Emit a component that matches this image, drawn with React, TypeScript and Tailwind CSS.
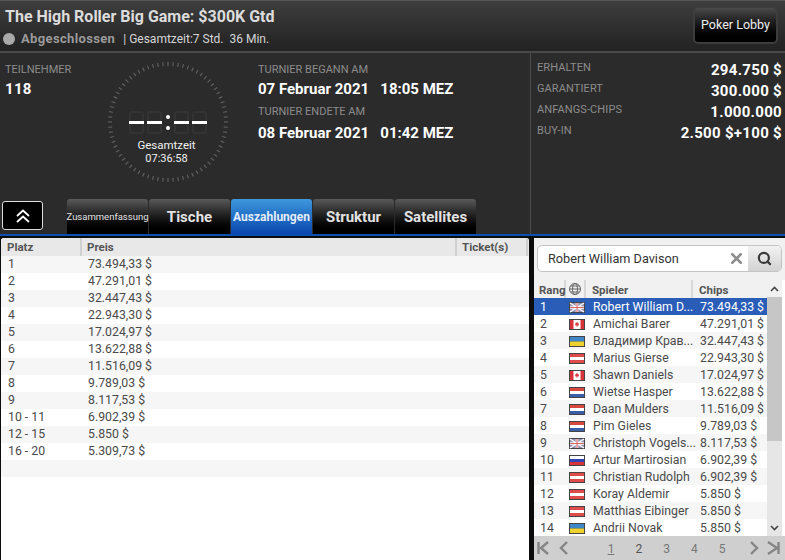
import { Search, X } from "lucide-react";

const font = { fontFamily: "Roboto, sans-serif" };

const prizes = [
  ["1", "73.494,33 $"],
  ["2", "47.291,01 $"],
  ["3", "32.447,43 $"],
  ["4", "22.943,30 $"],
  ["5", "17.024,97 $"],
  ["6", "13.622,88 $"],
  ["7", "11.516,09 $"],
  ["8", "9.789,03 $"],
  ["9", "8.117,53 $"],
  ["10 - 11", "6.902,39 $"],
  ["12 - 15", "5.850 $"],
  ["16 - 20", "5.309,73 $"],
  ["", ""],
];

type Flag = "uk" | "ca" | "ua" | "at" | "nl" | "ru";

const players: [number, Flag, string, string][] = [
  [1, "uk", "Robert William D...", "73.494,33 $"],
  [2, "ca", "Amichai Barer", "47.291,01 $"],
  [3, "ua", "Владимир Крав...", "32.447,43 $"],
  [4, "at", "Marius Gierse", "22.943,30 $"],
  [5, "ca", "Shawn Daniels", "17.024,97 $"],
  [6, "nl", "Wietse Hasper", "13.622,88 $"],
  [7, "nl", "Daan Mulders", "11.516,09 $"],
  [8, "nl", "Pim Gieles", "9.789,03 $"],
  [9, "uk", "Christoph Vogels...", "8.117,53 $"],
  [10, "ru", "Artur Martirosian", "6.902,39 $"],
  [11, "at", "Christian Rudolph", "6.902,39 $"],
  [12, "at", "Koray Aldemir", "5.850 $"],
  [13, "at", "Matthias Eibinger", "5.850 $"],
  [14, "ua", "Andrii Novak", "5.850 $"],
];

function FlagIcon({ flag }: { flag: Flag }) {
  return (
    <svg width="16" height="11" viewBox="0 0 16 11" className="block">
      <rect width="16" height="11" fill="#444" />
      {flag === "uk" && (
        <g>
          <rect x="1" y="1" width="14" height="9" fill="#8f8fb0" />
          <path d="M1 1L15 10M15 1L1 10" stroke="#fff" strokeWidth="1.4" />
          <path d="M8 1V10M1 5.5H15" stroke="#fff" strokeWidth="2.6" />
          <path d="M8 1V10M1 5.5H15" stroke="#d86a6a" strokeWidth="1.2" />
        </g>
      )}
      {flag === "ca" && (
        <g>
          <rect x="1" y="1" width="14" height="9" fill="#fff" />
          <rect x="1" y="1" width="3.5" height="9" fill="#d8333a" />
          <rect x="11.5" y="1" width="3.5" height="9" fill="#d8333a" />
          <path d="M8 2.5L9 4.5L10 4.2L9.6 6.5L8.3 6.5V8H7.7V6.5L6.4 6.5L6 4.2L7 4.5Z" fill="#d8333a" />
        </g>
      )}
      {flag === "ua" && (
        <g>
          <rect x="1" y="1" width="14" height="4.5" fill="#3f86c9" />
          <rect x="1" y="5.5" width="14" height="4.5" fill="#f0d22e" />
        </g>
      )}
      {flag === "at" && (
        <g>
          <rect x="1" y="1" width="14" height="3" fill="#df4a4a" />
          <rect x="1" y="4" width="14" height="3" fill="#fff" />
          <rect x="1" y="7" width="14" height="3" fill="#df4a4a" />
        </g>
      )}
      {flag === "nl" && (
        <g>
          <rect x="1" y="1" width="14" height="3" fill="#d9473f" />
          <rect x="1" y="4" width="14" height="3" fill="#fff" />
          <rect x="1" y="7" width="14" height="3" fill="#3a5fa8" />
        </g>
      )}
      {flag === "ru" && (
        <g>
          <rect x="1" y="1" width="14" height="3" fill="#fff" />
          <rect x="1" y="4" width="14" height="3" fill="#3146b4" />
          <rect x="1" y="7" width="14" height="3" fill="#d8333a" />
        </g>
      )}
    </svg>
  );
}

function Ticks() {
  const ticks = Array.from({ length: 72 }, (_, i) => (i * 360) / 72);
  return (
    <svg width="122" height="122" viewBox="0 0 122 122" className="block">
      {ticks.map((a) => (
        <line
          key={a}
          x1="61"
          y1="1"
          x2="61"
          y2="5"
          stroke="#5f5f5f"
          strokeWidth="1.2"
          transform={`rotate(${a} 61 61)`}
        />
      ))}
    </svg>
  );
}

function Digit() {
  return (
    <div className="relative w-[15px] h-[23px] rounded-[2px] border-2 border-[#333333]">
      <div className="absolute left-[-2px] right-[-2px] top-[8px] h-[3px] bg-white" />
    </div>
  );
}

function Stat({ label, value }: { label: string; value: string }) {
  return (
    <div className="flex justify-between h-[21px]">
      <span className="text-[11px] leading-[16px] text-[#8c8c8c] tracking-[0.1px]">{label}</span>
      <span className="text-[15px] leading-[21px] font-bold text-white tracking-[0.3px]">{value}</span>
    </div>
  );
}

function Tab({ label, active, small, w }: { label: string; active?: boolean; small?: boolean; w: string }) {
  return (
    <div
      className={`${w} h-[35px] pt-[1px] rounded-t-[3px] flex items-center justify-center font-bold whitespace-nowrap ${
        active
          ? "bg-gradient-to-b from-[#3f97dc] to-[#0b46ae] text-[#e4eefa]"
          : "bg-gradient-to-b from-[#5a5a5a] via-[#1c1c1c] to-black text-[#e2e2e2]"
      } ${small ? "text-[9.5px] font-normal" : active ? "text-[12px]" : "text-[15px]"}`}
    >
      {label}
    </div>
  );
}

export default function App() {
  return (
    <div className="w-[785px] h-[560px] bg-[#0c0c0c] overflow-hidden flex flex-col" style={font}>
      <div className="h-[53px] shrink-0 flex justify-between bg-gradient-to-b from-[#3e3e3e] to-[#222222] border-t border-b-2 border-t-[#555] border-b-[#4a4a4a] pl-[5px] pr-[7px]">
        <div>
          <div className="text-[16px] leading-[20px] mt-[6px] font-bold text-[#dcdcdc]">
            The High Roller Big Game: $300K Gtd
          </div>
          <div className="flex items-center mt-[3px] text-[12px] leading-[18px] text-[#d5d5d5]">
            <span className="w-[12px] h-[12px] ml-[-2px] rounded-full bg-[#a9a9a9]" />
            <span className="ml-[6px] text-[13px] font-bold text-[#9a9a9a] tracking-[0.35px]">Abgeschlossen</span>
            <span className="ml-[8px]">| Gesamtzeit:7 Std.&nbsp; 36 Min.</span>
          </div>
        </div>
        <div className="w-[85px] h-[38px] mt-[5px] rounded-[5px] border-2 border-[#3d3d3d] bg-gradient-to-b from-[#4a4a4a] via-[#161616] to-black flex items-center justify-center text-[12.5px] text-[#eeeeee]">
          Poker Lobby
        </div>
      </div>

      <div className="h-[181px] shrink-0 flex bg-[#2b2b2b]">
        <div className="w-[531px] shrink-0 border-r border-[#4c4c4c] flex flex-col">
          <div className="h-[145px] flex pl-[5px]">
            <div className="w-[103px] pt-[9px]">
              <div className="text-[11px] leading-[16px] text-[#8c8c8c]">TEILNEHMER</div>
              <div className="text-[15px] leading-[20px] mt-[1px] font-bold text-white tracking-[0.3px]">118</div>
            </div>
            <div className="relative w-[122px] h-[122px] mt-[8px] shrink-0 ml-[-1px]">
              <Ticks />
              <div className="absolute inset-0 flex flex-col items-center pt-[50px]">
                <div className="flex items-center">
                  <div className="flex gap-[3px]">
                    <Digit />
                    <Digit />
                  </div>
                  <div className="flex flex-col gap-[7px] mx-[4px]">
                    <span className="w-[4px] h-[4px] rounded-full bg-white" />
                    <span className="w-[4px] h-[4px] rounded-full bg-white" />
                  </div>
                  <div className="flex gap-[3px]">
                    <Digit />
                    <Digit />
                  </div>
                </div>
                <div className="text-[11.5px] leading-[13px] mt-[5px] ml-[-3px] text-[#f0f0f0]">Gesamtzeit</div>
                <div className="text-[11px] leading-[13px] ml-[-3px] text-[#f0f0f0]">07:36:58</div>
              </div>
            </div>
            <div className="ml-[29px] pt-[9px]">
              <div className="text-[11px] leading-[16px] text-[#8c8c8c]">TURNIER BEGANN AM</div>
              <div className="text-[15px] leading-[20px] mt-[1px] font-bold text-white whitespace-pre">
                07 Februar 2021   18:05 MEZ
              </div>
              <div className="text-[11px] leading-[16px] mt-[5px] text-[#8c8c8c]">TURNIER ENDETE AM</div>
              <div className="text-[15px] leading-[20px] mt-[3px] font-bold text-white whitespace-pre">
                08 Februar 2021   01:42 MEZ
              </div>
            </div>
          </div>
          <div className="flex items-start pl-[2px] mt-[1px]">
            <div className="w-[41px] h-[29px] mt-[2px] rounded-[3px] border border-[#dddddd] bg-black flex items-center justify-center">
              <svg width="14" height="14" viewBox="0 0 14 14" fill="none" stroke="#fff" strokeWidth="1.8">
                <path d="M1 7L7 1.5L13 7" />
                <path d="M1 13L7 7.5L13 13" />
              </svg>
            </div>
            <div className="ml-[24px] flex gap-[1px]">
              <Tab label="Zusammenfassung" small w="w-[81px]" />
              <Tab label="Tische" w="w-[81px]" />
              <Tab label="Auszahlungen" active w="w-[81px]" />
              <Tab label="Struktur" w="w-[81px]" />
              <Tab label="Satellites" w="w-[81px]" />
            </div>
          </div>
        </div>
        <div className="flex-1 pl-[6px] pr-[3px] pt-[7px]">
          <Stat label="ERHALTEN" value="294.750 $" />
          <Stat label="GARANTIERT" value="300.000 $" />
          <Stat label="ANFANGS-CHIPS" value="1.000.000" />
          <Stat label="BUY-IN" value="2.500 $+100 $" />
        </div>
      </div>

      <div className="h-[2px] shrink-0 bg-[#0b4fb0]" />

      <div className="flex-1 flex min-h-0 pt-[2px] gap-[5px] pl-[1px]">
        <div className="w-[528px] shrink-0 bg-white rounded-t-[3px] text-[12.3px] text-[#4a4a4a]">
          <div className="h-[18px] flex bg-[#e8e8e8] rounded-t-[3px] font-bold text-[11.5px] leading-[18px] text-[#555]">
            <div className="w-[81px] pl-[6px] border-r-2 border-[#d0d0d0]">Platz</div>
            <div className="w-[375px] pl-[5px] border-r-2 border-[#d0d0d0]">Preis</div>
            <div className="w-[71px] pl-[5px] border-r-2 border-[#d0d0d0]">Ticket(s)</div>
          </div>
          {prizes.map(([place, prize], i) => (
            <div key={i} className={`h-[17px] flex leading-[17px] ${i % 2 === 0 ? "bg-[#f6f6f6]" : "bg-white"}`}>
              <div className="w-[87px] pl-[7px]">{place}</div>
              <div>{prize}</div>
            </div>
          ))}
        </div>

        <div className="flex-1 bg-white flex flex-col rounded-t-[3px] min-w-0">
          <div className="h-[42px] shrink-0 bg-[#f1f1f1] px-[3px] pt-[7px] pb-[8px]">
            <div className="h-[27px] flex rounded-[5px] border border-[#c4c4c4] overflow-hidden bg-white">
              <div className="flex-1 pl-[10px] text-[12.7px] leading-[25px] text-[#333]">Robert William Davison</div>
              <div className="w-[28px] pl-[5px] flex items-center justify-center">
                <X size={17} strokeWidth={3.5} color="#8d8d8d" />
              </div>
              <div className="w-[33px] bg-gradient-to-b from-[#f2f2f2] to-[#d2d2d2] flex items-center justify-center">
                <Search size={15} strokeWidth={3.5} color="#3a3a3a" />
              </div>
            </div>
          </div>
          <div className="flex-1 flex min-h-0">
            <div className="w-[233px] shrink-0 text-[12.3px] text-[#4a4a4a]">
              <div className="h-[18px] flex font-bold text-[11.5px] leading-[20px] text-[#555] bg-[#f1f1f1]">
                <div className="w-[32px] pl-[5px] border-r-2 border-[#d8d8d8]">Rang</div>
                <div className="w-[20px] flex items-center justify-center border-r-2 border-[#d8d8d8]">
                  <svg width="12" height="12" viewBox="0 0 12 12" fill="none" stroke="#666" strokeWidth="1">
                    <circle cx="6" cy="6" r="5.5" />
                    <ellipse cx="6" cy="6" rx="2.5" ry="5.5" />
                    <path d="M0.5 6H11.5M1.5 3H10.5M1.5 9H10.5" />
                  </svg>
                </div>
                <div className="w-[107px] pl-[6px] border-r-2 border-[#d8d8d8]">Spieler</div>
                <div className="pl-[6px]">Chips</div>
              </div>
              {players.map(([rank, flag, name, chips], i) => (
                <div
                  key={rank}
                  className={`h-[17px] pt-[2px] flex items-center leading-[15px] ${
                    i === 0 ? "bg-[#2a5db8] text-white" : i % 2 === 1 ? "bg-white" : "bg-[#f6f6f6]"
                  }`}
                >
                  <div className="w-[35px] pl-[6px]">{rank}</div>
                  <div className="w-[24px]">
                    <FlagIcon flag={flag} />
                  </div>
                  <div className="w-[107px] whitespace-nowrap">{name}</div>
                  <div className="whitespace-nowrap">{chips}</div>
                </div>
              ))}
            </div>
            <div className="w-[15px] bg-[#e6e6e6] flex flex-col items-center justify-between">
              <div className="w-full">
                <div className="h-[17px] bg-[#f1f1f1] flex items-center justify-center">
                  <svg width="9" height="6" viewBox="0 0 9 6" fill="none" stroke="#444" strokeWidth="1.6">
                    <path d="M1 5L4.5 1.5L8 5" />
                  </svg>
                </div>
                <div className="h-[144px] bg-[#c6c6c6]" />
              </div>
              <div className="h-[16px] flex items-center justify-center">
                <svg width="9" height="6" viewBox="0 0 9 6" fill="none" stroke="#444" strokeWidth="1.6">
                  <path d="M1 1L4.5 4.5L8 1" />
                </svg>
              </div>
            </div>
          </div>
          <div className="h-[24px] shrink-0 bg-[#cfcfcf] flex items-center pl-[3px] pr-[5px] text-[12px] text-[#666]">
            <svg width="36" height="14" viewBox="0 0 36 14" fill="none" stroke="#858585" strokeWidth="2.4">
              <path d="M1.5 1V13M11 1L4 7L11 13" />
              <path d="M30 1L24 7L30 13" />
            </svg>
            <div className="flex-1 flex justify-center gap-[21px] pl-[16px] pt-[2px]">
              <span className="underline text-[#777]">1</span>
              <span className="text-[#555]">2</span>
              <span className="text-[#777]">3</span>
              <span className="text-[#777]">4</span>
              <span className="text-[#777]">5</span>
            </div>
            <svg width="36" height="14" viewBox="0 0 36 14" fill="none" stroke="#858585" strokeWidth="2.4">
              <path d="M7 1L13 7L7 13" />
              <path d="M24 1L33 7L24 13M34.5 1V13" />
            </svg>
          </div>
        </div>
      </div>
    </div>
  );
}
